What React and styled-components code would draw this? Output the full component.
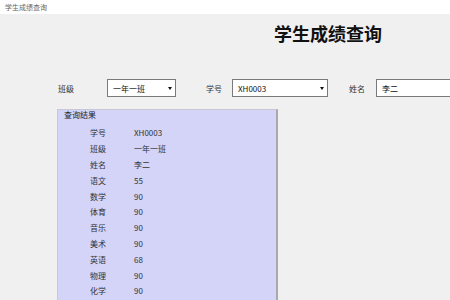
import React from 'react';
import styled, { createGlobalStyle } from 'styled-components';

const GlobalStyle = createGlobalStyle`
  html, body {
    margin: 0;
    padding: 0;
    background: #f0f0f0;
    font-family: "Noto Sans CJK SC", "Liberation Sans", sans-serif;
    overflow: hidden;
  }
`;

const Window = styled.div`
  width: 450px;
  height: 300px;
  display: flex;
  flex-direction: column;
  background: #f0f0f0;
  overflow: hidden;
`;

const TitleBar = styled.div`
  height: 14px;
  background: #fff;
  color: #666;
  font-size: 7px;
  line-height: 14px;
  padding-left: 5px;
  flex-shrink: 0;
`;

const Heading = styled.h1`
  margin: 7px 0 0 274px;
  font-size: 18px;
  font-weight: 700;
  color: #111;
  line-height: 24px;
`;

const FilterRow = styled.div`
  display: flex;
  align-items: center;
  margin: 33px 0 0 58px;
  height: 20px;
  flex-shrink: 0;
`;

const Label = styled.span`
  font-size: 8px;
  color: #333;
  white-space: nowrap;
  flex-shrink: 0;
  margin-right: ${(p) => p.gap}px;
`;

const Select = styled.div`
  width: ${(p) => p.w}px;
  height: 18px;
  background: #fff;
  border: 1px solid #7a7a7a;
  box-sizing: border-box;
  display: flex;
  align-items: center;
  justify-content: space-between;
  padding: 0 3px 0 5px;
  font-size: 8px;
  color: #111;
  white-space: nowrap;
  margin-right: ${(p) => p.mr}px;
  flex-shrink: 0;
`;

const Arrow = styled.span`
  width: 0;
  height: 0;
  border-left: 2px solid transparent;
  border-right: 2px solid transparent;
  border-top: 3px solid #111;
`;

const GroupBox = styled.fieldset`
  margin: 11px 0 0 57px;
  width: 221px;
  box-sizing: border-box;
  flex: 1;
  background: #d4d4f8;
  border: 1px solid #c8c8d4;
  border-right: 2px solid #a8a8b0;
  border-bottom: none;
  padding: 0;
`;

const Legend = styled.div`
  font-size: 8px;
  color: #222;
  padding: 0 0 0 6px;
  height: 10px;
  line-height: 10px;
`;

const Rows = styled.div`
  display: flex;
  flex-direction: column;
  padding-top: 5px;
`;

const Row = styled.div`
  display: flex;
  align-items: center;
  height: 15.8px;
  font-size: 8px;
  color: #333;
`;

const Key = styled.span`
  width: 44px;
  margin-left: 32px;
`;

const Val = styled.span``;

const data = [
  ['学号', 'XH0003'],
  ['班级', '一年一班'],
  ['姓名', '李二'],
  ['语文', '55'],
  ['数学', '90'],
  ['体育', '90'],
  ['音乐', '90'],
  ['美术', '90'],
  ['英语', '68'],
  ['物理', '90'],
  ['化学', '90'],
];

export default function App() {
  return (
    <Window>
      <GlobalStyle />
      <TitleBar>学生成绩查询</TitleBar>
      <Heading>学生成绩查询</Heading>
      <FilterRow>
        <Label gap={33}>班级</Label>
        <Select w={69} mr={30}>一年一班<Arrow /></Select>
        <Label gap={10}>学号</Label>
        <Select w={96} mr={21}>XH0003<Arrow /></Select>
        <Label gap={11}>姓名</Label>
        <Select w={90} mr={0}>李二</Select>
      </FilterRow>
      <GroupBox>
        <Legend>查询结果</Legend>
        <Rows>
          {data.map(([k, v]) => (
            <Row key={k}>
              <Key>{k}</Key>
              <Val>{v}</Val>
            </Row>
          ))}
        </Rows>
      </GroupBox>
    </Window>
  );
}
